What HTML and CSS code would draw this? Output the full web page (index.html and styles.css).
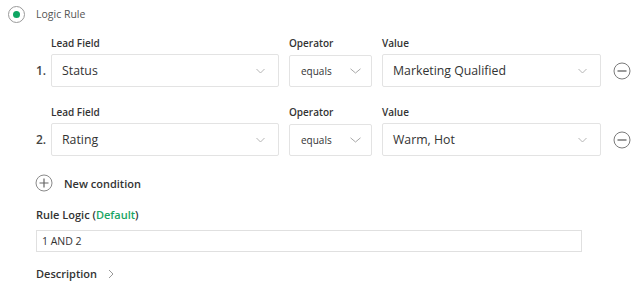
FILE: index.html
```html
<!DOCTYPE html>
<html>
<head>
<meta charset="utf-8">
<link rel="stylesheet" href="styles.css">
</head>
<body>
<div class="page">
  <div class="radio-row">
    <span class="radio"><span class="radio-dot"></span></span>
    <span class="radio-label">Logic Rule</span>
  </div>

  <div class="rules">
    <div class="rule">
      <div class="labels">
        <span class="c-num"></span>
        <span class="lbl c-field">Lead Field</span>
        <span class="lbl c-op">Operator</span>
        <span class="lbl c-val">Value</span>
      </div>
      <div class="fields">
        <span class="num c-num">1.</span>
        <div class="select c-field"><span>Status</span><svg class="chev" width="9" height="6" viewBox="0 0 9 6"><path d="M0.5 1 L4.5 5 L8.5 1" fill="none" stroke="#b5b5b5" stroke-width="1"/></svg></div>
        <div class="select op c-op"><span>equals</span><svg class="chev" width="11" height="6" viewBox="0 0 11 6"><path d="M0.5 0.8 L5.5 5 L10.5 0.8" fill="none" stroke="#a8a8a8" stroke-width="1"/></svg></div>
        <div class="select c-val"><span>Marketing Qualified</span><svg class="chev" width="9" height="6" viewBox="0 0 9 6"><path d="M0.5 1 L4.5 5 L8.5 1" fill="none" stroke="#b5b5b5" stroke-width="1"/></svg></div>
        <svg class="minus" width="18" height="18" viewBox="0 0 18 18"><circle cx="9" cy="9" r="8" fill="none" stroke="#7a7a7a" stroke-width="1"/><path d="M4.5 9 H13.5" stroke="#555" stroke-width="1.2"/></svg>
      </div>
    </div>

    <div class="rule">
      <div class="labels">
        <span class="c-num"></span>
        <span class="lbl c-field">Lead Field</span>
        <span class="lbl c-op">Operator</span>
        <span class="lbl c-val">Value</span>
      </div>
      <div class="fields">
        <span class="num c-num">2.</span>
        <div class="select c-field"><span>Rating</span><svg class="chev" width="9" height="6" viewBox="0 0 9 6"><path d="M0.5 1 L4.5 5 L8.5 1" fill="none" stroke="#b5b5b5" stroke-width="1"/></svg></div>
        <div class="select op c-op"><span>equals</span><svg class="chev" width="11" height="6" viewBox="0 0 11 6"><path d="M0.5 0.8 L5.5 5 L10.5 0.8" fill="none" stroke="#a8a8a8" stroke-width="1"/></svg></div>
        <div class="select c-val"><span>Warm, Hot</span><svg class="chev" width="9" height="6" viewBox="0 0 9 6"><path d="M0.5 1 L4.5 5 L8.5 1" fill="none" stroke="#b5b5b5" stroke-width="1"/></svg></div>
        <svg class="minus" width="18" height="18" viewBox="0 0 18 18"><circle cx="9" cy="9" r="8" fill="none" stroke="#7a7a7a" stroke-width="1"/><path d="M4.5 9 H13.5" stroke="#555" stroke-width="1.2"/></svg>
      </div>
    </div>

    <div class="add-row">
      <svg class="plus" width="18" height="18" viewBox="0 0 18 18"><circle cx="9" cy="9" r="8" fill="none" stroke="#8a8a8a" stroke-width="1"/><path d="M4.5 9 H13.5 M9 4.5 V13.5" stroke="#666" stroke-width="1.2"/></svg>
      <span class="add-label">New condition</span>
    </div>

    <div class="logic">
      <div class="logic-label">Rule Logic (<span class="green">Default</span>)</div>
      <div class="logic-input">1 AND 2</div>
    </div>

    <div class="desc">
      <span>Description</span>
      <svg width="6" height="10" viewBox="0 0 6 10"><path d="M1 1 L5 5 L1 9" fill="none" stroke="#999" stroke-width="1"/></svg>
    </div>
  </div>
</div>
</body>
</html>
```

FILE: styles.css
```css
* { box-sizing: border-box; }
html, body { margin: 0; padding: 0; background: #fff; }
body {
  font-family: "Open Sans", "Noto Sans", sans-serif;
  color: #333;
  width: 635px;
  height: 289px;
  overflow: hidden;
}
.page { padding: 5px 0 0 8px; }

.radio-row { display: flex; align-items: center; height: 18px; }
.radio {
  width: 17px; height: 17px;
  border: 1px solid #9a9a9a;
  border-radius: 50%;
  display: flex; align-items: center; justify-content: center;
}
.radio-dot { width: 7px; height: 7px; border-radius: 50%; background: #0ea663; }
.radio-label { margin-left: 11px; font-size: 10.5px; color: #555; }

.rules { padding-left: 28px; padding-top: 13px; }

.rule { margin-bottom: 18px; }
.labels, .fields { display: flex; }
.labels { height: 18px; align-items: flex-start; }
.fields { align-items: center; height: 33px; }

.c-num { width: 15px; flex: none; }
.c-field { width: 228px; flex: none; }
.c-op { width: 83px; flex: none; margin-left: 10px; }
.c-val { width: 219px; flex: none; margin-left: 10px; }
.minus { flex: none; margin-left: 12px; }

.lbl { font-size: 10px; font-weight: 600; color: #333; line-height: 14px; }
.num { font-size: 12px; font-weight: 600; color: #444; }

.select {
  height: 33px;
  border: 1px solid #e3e3e3;
  border-radius: 2px;
  display: flex; align-items: center; justify-content: space-between;
  padding: 0 13px 0 10px;
  font-size: 12.3px; color: #333;
}
.select.op { font-size: 10px; padding: 0 10px 0 11px; height: 32px; }

.add-row { display: flex; align-items: center; margin-top: 5px; height: 18px; }
.plus { margin-left: -1px; }
.add-label { margin-left: 11px; font-size: 11px; font-weight: 600; color: #333; }

.logic { margin-top: 16px; }
.logic-label { font-size: 11px; font-weight: 600; color: #333; line-height: 14px; }
.green { color: #1aa564; }
.logic-input {
  margin-top: 8px;
  width: 546px; height: 22px;
  border: 1px solid #e0e0e0;
  font-size: 10.5px; color: #333;
  padding-left: 5px;
  display: flex; align-items: center;
}

.desc { display: flex; align-items: center; margin-top: 14px; font-size: 11px; font-weight: 600; color: #333; }
.desc svg { margin-left: 11px; }
```
